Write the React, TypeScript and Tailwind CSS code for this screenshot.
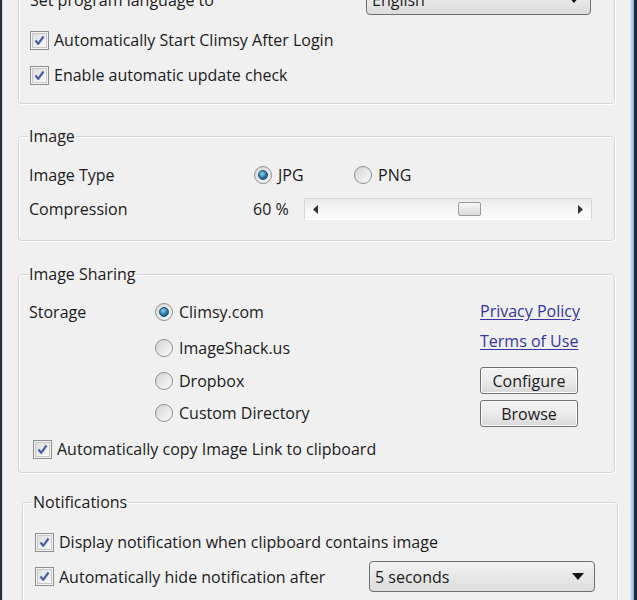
import React from 'react';

// --- Small Win7-style controls ---
const Checkbox = ({ checked = true }: { checked?: boolean }) => (
  <span className="inline-flex items-center justify-center w-[19px] h-[19px] border border-[#8e8f8f] bg-[#f4f4f4] shrink-0">
    <span className="flex items-center justify-center w-[15px] h-[15px] border border-[#c8c8c8] bg-gradient-to-br from-[#dedede] to-[#fafafa]">
      {checked && (
        <svg width="13" height="13" viewBox="0 0 13 13">
          <path d="M2.5 6.5 L5.2 9.8 L10.5 2.5" fill="none" stroke="#4b5fa6" strokeWidth="2.2" strokeLinejoin="round" />
        </svg>
      )}
    </span>
  </span>
);

const Radio = ({ checked = false }: { checked?: boolean }) => (
  <span className="inline-flex items-center justify-center w-[18px] h-[18px] rounded-full border border-[#8f9092] bg-gradient-to-br from-[#d4d4d4] to-[#fbfbfb] shrink-0">
    {checked && (
      <span className="w-[10px] h-[10px] rounded-full bg-[radial-gradient(circle_at_40%_35%,#8fd3f5,#1f6f9c_60%,#154a6a)] border border-[#1c4e6e]" />
    )}
  </span>
);

const Dropdown = ({ value, className = '' }: { value: string; className?: string }) => (
  <div
    className={`flex items-center justify-between rounded-[4px] border border-[#707070] bg-gradient-to-b from-[#f3f3f3] to-[#dcdcdc] pl-[5px] pr-[10px] ${className}`}
  >
    <span>{value}</span>
    <svg width="12" height="8" viewBox="0 0 12 8">
      <path d="M0 0 H12 L6 7 Z" fill="#111" />
    </svg>
  </div>
);

const Button = ({ children }: { children: React.ReactNode }) => (
  <div className="flex items-center justify-center w-[98px] h-[27px] rounded-[3px] border border-[#707070] bg-gradient-to-b from-[#f4f4f4] via-[#ebebeb] to-[#d8d8d8] shadow-[inset_0_0_0_1px_#fcfcfc]">
    {children}
  </div>
);

const Group = ({ title, className = '', children }: { title: string; className?: string; children: React.ReactNode }) => (
  <fieldset
    className={`rounded-[4px] border border-[#d6d6d6] shadow-[inset_1px_1px_0_#ffffff,1px_1px_0_#ffffff] px-[10px] ${className}`}
  >
    <legend className="px-[1px] -ml-[1px] leading-[20px]">{title}</legend>
    {children}
  </fieldset>
);

const CheckRow = ({ label }: { label: string }) => (
  <div className="flex items-center gap-[5px] h-[20px]">
    <Checkbox />
    <span>{label}</span>
  </div>
);

const RadioRow = ({ label, checked }: { label: string; checked?: boolean }) => (
  <div className="flex items-center gap-[6px] h-[20px]">
    <Radio checked={checked} />
    <span>{label}</span>
  </div>
);

export default function App() {
  return (
    <div
      className="w-[637px] h-[600px] overflow-hidden flex bg-[#f0f0f0] text-[#1b1b1b] text-[16px]"
      style={{ fontFamily: '"Segoe UI", "Open Sans", "Noto Sans", sans-serif' }}
    >
      {/* window frame, left */}
      <div className="w-[2px] bg-[#2a2f33]" />
      <div className="w-px bg-[#cfdeea]" />

      <div className="flex-1 flex flex-col">
        {/* General (top cut off) */}
        <div className="-mt-[32px] ml-[15px] mr-[15px] rounded-[4px] border border-[#d6d6d6] shadow-[inset_1px_1px_0_#ffffff,1px_1px_0_#ffffff] pl-[11px] pr-[23px] pt-[16px] pb-[18px]">
          <div className="flex items-center justify-between h-[30px]">
            <span>Set program language to</span>
            <Dropdown value="English" className="w-[225px] h-[30px]" />
          </div>
          <div className="mt-[15px] flex flex-col gap-[15px]">
            <CheckRow label="Automatically Start Climsy After Login" />
            <CheckRow label="Enable automatic update check" />
          </div>
        </div>

        {/* Image */}
        <Group title="Image" className="mt-[22px] ml-[15px] mr-[15px] pr-[22px] pb-[19px]">
          <div className="mt-[19px] grid grid-cols-[225px_1fr] items-center gap-y-[12px]">
            <span className="leading-[20px]">Image Type</span>
            <div className="flex items-center">
              <div className="w-[100px]">
                <RadioRow label="JPG" checked />
              </div>
              <RadioRow label="PNG" />
            </div>
            <span className="leading-[22px]">Compression</span>
            <div className="flex items-center">
              <span className="w-[51px] -ml-[1px]">60 %</span>
              <div className="flex-1 h-[22px] flex items-center justify-between px-[8px] border border-[#d8d8d8] border-b-white bg-gradient-to-b from-[#e9e9e9] via-[#f6f6f6] to-[#fbfbfb]">
                <svg width="5" height="9" viewBox="0 0 5 9">
                  <path d="M5 0 V9 L0 4.5 Z" fill="#333" />
                </svg>
                <div className="ml-[140px] w-[23px] h-[14px] rounded-[2px] border border-[#9a9a9a] bg-gradient-to-b from-[#f7f7f7] to-[#d9d9d9]" />
                <div className="flex-1" />
                <svg width="5" height="9" viewBox="0 0 5 9">
                  <path d="M0 0 V9 L5 4.5 Z" fill="#333" />
                </svg>
              </div>
            </div>
          </div>
        </Group>

        {/* Image Sharing */}
        <Group title="Image Sharing" className="mt-[23px] ml-[15px] mr-[15px] pr-[32px] pb-[13px]">
          <div className="mt-[17px] flex items-start">
            <span className="w-[126px] mt-[1px] leading-[20px]">Storage</span>
            <div className="flex-1 flex flex-col mt-[1px]">
              <RadioRow label="Climsy.com" checked />
              <div className="mt-[16px]">
                <RadioRow label="ImageShack.us" />
              </div>
              <div className="mt-[13px]">
                <RadioRow label="Dropbox" />
              </div>
              <div className="mt-[12px]">
                <RadioRow label="Custom Directory" />
              </div>
            </div>
            <div className="flex flex-col items-start w-[102px]">
              <span className="leading-[20px] text-[#3434a6] underline underline-offset-2">Privacy Policy</span>
              <span className="mt-[10px] leading-[20px] text-[#3434a6] underline underline-offset-2">Terms of Use</span>
              <div className="mt-[16px]">
                <Button>Configure</Button>
              </div>
              <div className="mt-[6px]">
                <Button>Browse</Button>
              </div>
            </div>
          </div>
          <div className="mt-[12px] pl-[4px]">
            <CheckRow label="Automatically copy Image Link to clipboard" />
          </div>
        </Group>

        {/* Notifications (bottom cut off) */}
        <Group title="Notifications" className="mt-[19px] ml-[19px] mr-[12px] pr-[22px] pb-[20px]">
          <div className="mt-[20px] pl-[2px]">
            <CheckRow label="Display notification when clipboard contains image" />
          </div>
          <div className="mt-[9px] pl-[2px] flex items-center justify-between h-[31px]">
            <CheckRow label="Automatically hide notification after" />
            <Dropdown value="5 seconds" className="w-[226px] h-[31px]" />
          </div>
        </Group>
      </div>

      {/* window frame, right */}
      <div className="w-px bg-[#dce8f1]" />
      <div className="w-[3px] bg-gradient-to-r from-[#bcd8ee] to-[#8fb8d8]" />
      <div className="w-[3px] bg-[#1d2a34]" />
    </div>
  );
}
